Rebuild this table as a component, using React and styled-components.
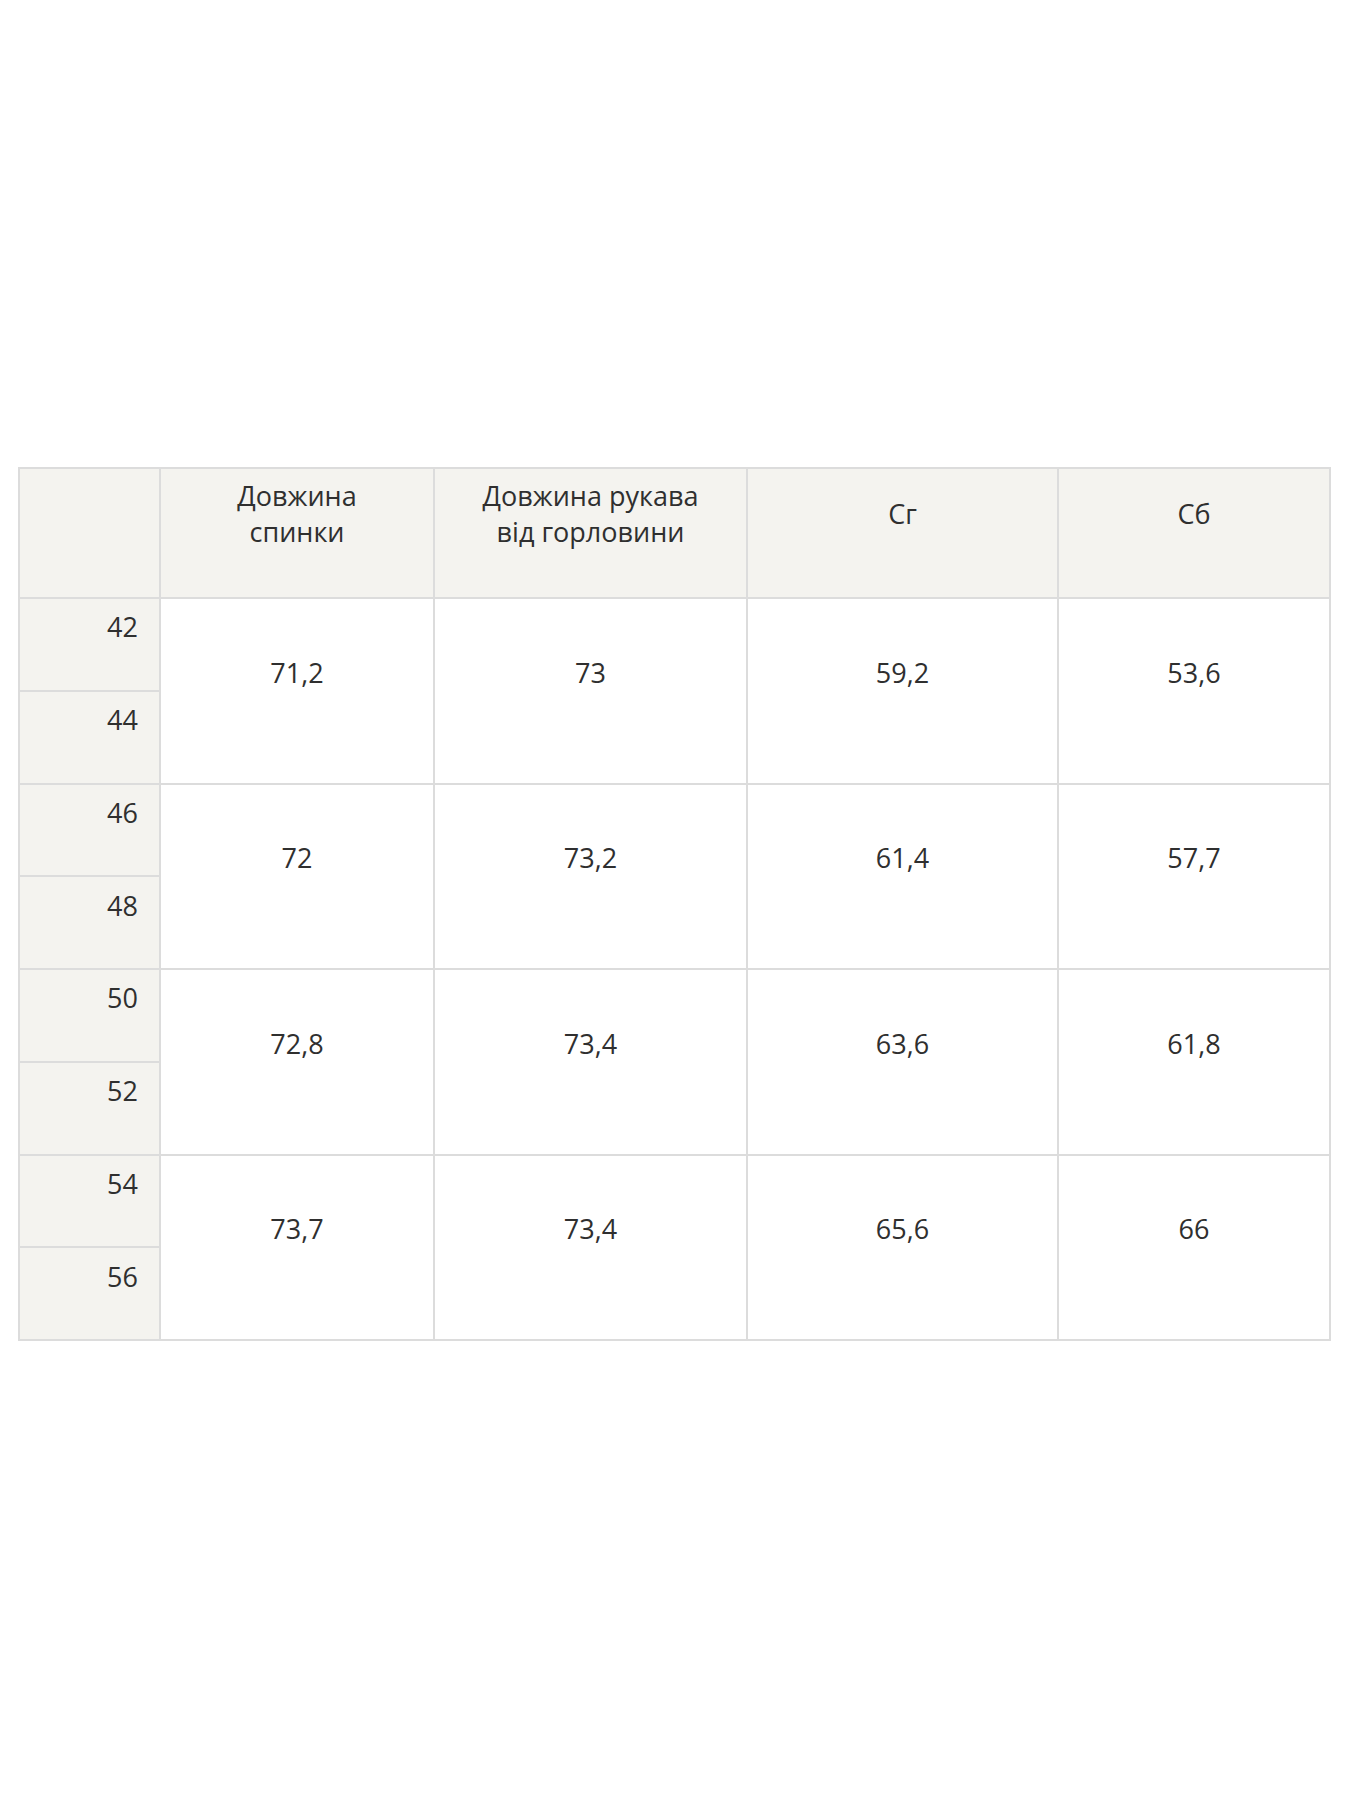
import React from "react";
import styled, { createGlobalStyle } from "styled-components";

const Global = createGlobalStyle`
  html, body { margin: 0; padding: 0; background: #ffffff; }
  body { font-family: "Open Sans", "Noto Sans", sans-serif; color: #2f2f2f; }
`;

const Page = styled.div`
  padding: 467px 20px 0 18px;
`;

const Table = styled.table`
  border-collapse: collapse;
  table-layout: fixed;
  width: 1311px;
  border: 2px solid #dcdcdc;
  font-size: 27px;
  line-height: 36px;
`;

const HeadCell = styled.th`
  background: #f4f3ef;
  border: 2px solid #dcdcdc;
  font-weight: 400;
  text-align: center;
  vertical-align: middle;
  height: 129px;
  padding: 9px 8px 47px;
  box-sizing: border-box;
`;

const SizeCell = styled.td`
  background: #f4f3ef;
  border: 2px solid #dcdcdc;
  text-align: right;
  vertical-align: middle;
  height: ${(p) => p.$h}px;
  padding: 10px 21px 44px 10px;
  box-sizing: border-box;
`;

const ValueCell = styled.td`
  background: #ffffff;
  border: 2px solid #dcdcdc;
  text-align: center;
  vertical-align: middle;
  padding: 9px 10px 45px;
`;

const headers = [
  ["Довжина", "спинки"],
  ["Довжина рукава", "від горловини"],
  ["Сг"],
  ["Сб"],
];

const groups = [
  { sizes: ["42", "44"], values: ["71,2", "73", "59,2", "53,6"] },
  { sizes: ["46", "48"], values: ["72", "73,2", "61,4", "57,7"] },
  { sizes: ["50", "52"], values: ["72,8", "73,4", "63,6", "61,8"] },
  { sizes: ["54", "56"], values: ["73,7", "73,4", "65,6", "66"] },
];

const widths = [141, 274, 313, 311, 272];

export default function App() {
  return (
    <Page>
      <Global />
      <Table>
        <colgroup>
          {widths.map((w, i) => (
            <col key={i} style={{ width: w }} />
          ))}
        </colgroup>
        <thead>
          <tr>
            <HeadCell />
            {headers.map((lines, i) => (
              <HeadCell key={i}>
                {lines.map((l, j) => (
                  <React.Fragment key={j}>
                    {j > 0 && <br />}
                    {l}
                  </React.Fragment>
                ))}
              </HeadCell>
            ))}
          </tr>
        </thead>
        <tbody>
          {groups.map((g, gi) => (
            <React.Fragment key={gi}>
              <tr>
                <SizeCell $h={92.5}>{g.sizes[0]}</SizeCell>
                {g.values.map((v, vi) => (
                  <ValueCell key={vi} rowSpan={2}>
                    {v}
                  </ValueCell>
                ))}
              </tr>
              <tr>
                <SizeCell $h={93}>{g.sizes[1]}</SizeCell>
              </tr>
            </React.Fragment>
          ))}
        </tbody>
      </Table>
    </Page>
  );
}
